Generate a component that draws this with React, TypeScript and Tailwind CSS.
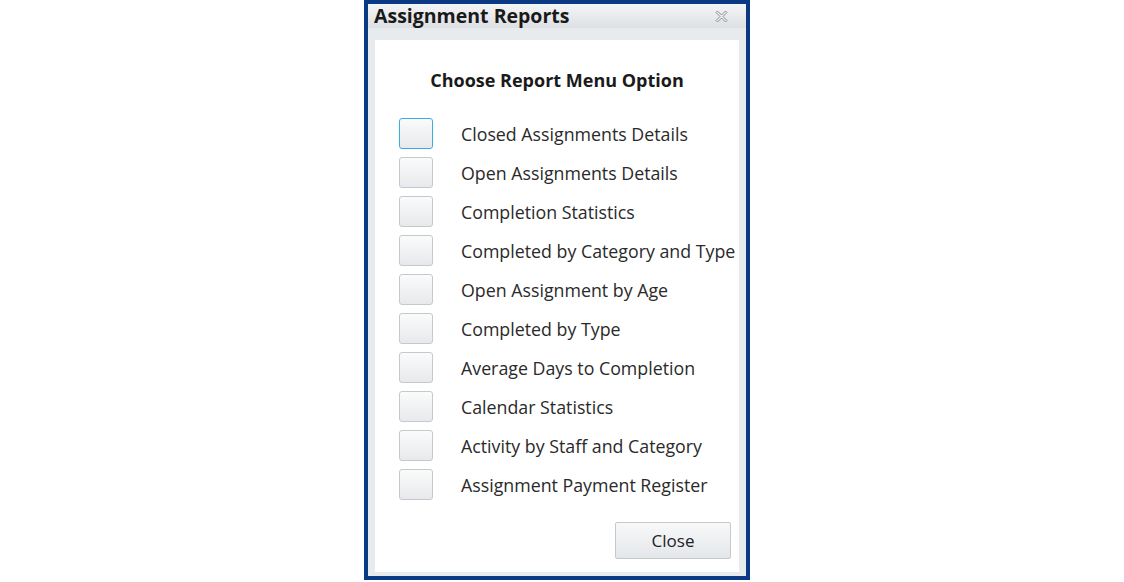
import React from 'react';

const options = [
  'Closed Assignments Details',
  'Open Assignments Details',
  'Completion Statistics',
  'Completed by Category and Type',
  'Open Assignment by Age',
  'Completed by Type',
  'Average Days to Completion',
  'Calendar Statistics',
  'Activity by Staff and Category',
  'Assignment Payment Register',
];

const App: React.FC = () => {
  return (
    <div className="w-[1124px] h-[582px] bg-white" style={{ fontFamily: '"Open Sans", "Noto Sans", sans-serif' }}>
      <div className="ml-[364px] w-[386px] h-[580px] border-4 border-[#0b3a85] bg-[#e8ebee] flex flex-col">
        <div className="h-[24px] shrink-0 flex items-center justify-between pl-[6px] pr-[18px] bg-gradient-to-b from-[#f4f5f6] to-[#dde0e4]">
          <span className="text-[19.5px] font-bold text-[#1a1a1a] leading-none">Assignment Reports</span>
          <svg width="13" height="13" viewBox="0 0 13 13">
            <path
              d="M1 2.5 L2.5 1 L6.5 5 L10.5 1 L12 2.5 L8 6.5 L12 10.5 L10.5 12 L6.5 8 L2.5 12 L1 10.5 L5 6.5 Z"
              fill="#eceef0"
              stroke="#8e8e8e"
              strokeWidth="1"
              strokeLinejoin="round"
            />
          </svg>
        </div>
        <div className="flex-1 pt-[12px] px-[7px] pb-[4px]">
          <div className="h-full bg-white flex flex-col">
            <div className="mt-[28px] h-[24px] text-center text-[18px] font-bold text-[#1a1a1a] leading-[24px]">
              Choose Report Menu Option
            </div>
            <div className="mt-[26px] flex flex-col gap-[8px] pl-[24px]">
              {options.map((label, i) => (
                <div key={label} className="flex items-center h-[31px]">
                  <div
                    className={`w-[34px] h-[31px] shrink-0 rounded-[3px] border-[1.5px] bg-gradient-to-b from-[#fafbfb] to-[#e7e9ec] ${
                      i === 0 ? 'border-[#38aee6]' : 'border-[#c6c8ca]'
                    }`}
                  />
                  <span className="ml-[28px] pt-[2px] whitespace-nowrap text-[17.8px] text-[#2a2a2a]">{label}</span>
                </div>
              ))}
            </div>
            <div className="flex-1" />
            <div className="flex justify-end pr-[8px] pb-[13px]">
              <button className="w-[116px] h-[37px] rounded-[2px] border-[1.5px] border-[#c6c8ca] bg-gradient-to-b from-[#f7f8f9] to-[#e4e7ea] text-[17px] text-[#222]">
                Close
              </button>
            </div>
          </div>
        </div>
      </div>
    </div>
  );
};

export default App;
